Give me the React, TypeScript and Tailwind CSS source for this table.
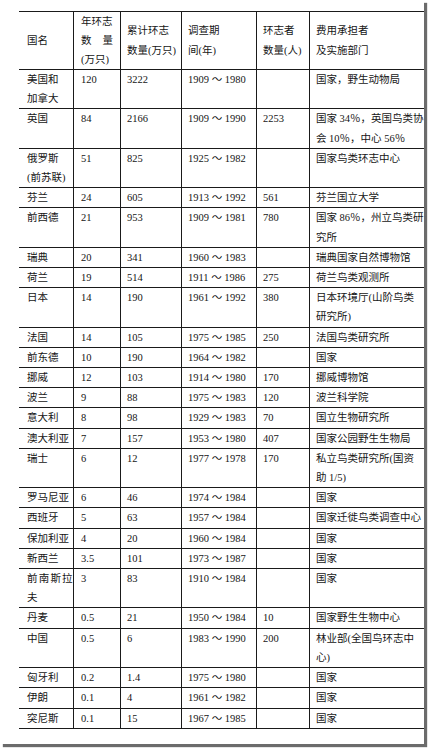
import React from 'react';

type Row = {
  name: string[];
  perYear: string;
  total: string;
  period: string;
  ringers: string;
  dept: string[];
};

const rows: Row[] = [
  { name: ['美国和', '加拿大'], perYear: '120', total: '3222', period: '1909 ～ 1980', ringers: '', dept: ['国家，野生动物局'] },
  { name: ['英国'], perYear: '84', total: '2166', period: '1909 ～ 1990', ringers: '2253', dept: ['国家 34％，英国鸟类协', '会 10％，中心 56％'] },
  { name: ['俄罗斯', '(前苏联)'], perYear: '51', total: '825', period: '1925 ～ 1982', ringers: '', dept: ['国家鸟类环志中心'] },
  { name: ['芬兰'], perYear: '24', total: '605', period: '1913 ～ 1992', ringers: '561', dept: ['芬兰国立大学'] },
  { name: ['前西德'], perYear: '21', total: '953', period: '1909 ～ 1981', ringers: '780', dept: ['国家 86％，州立鸟类研', '究所'] },
  { name: ['瑞典'], perYear: '20', total: '341', period: '1960 ～ 1983', ringers: '', dept: ['瑞典国家自然博物馆'] },
  { name: ['荷兰'], perYear: '19', total: '514', period: '1911 ～ 1986', ringers: '275', dept: ['荷兰鸟类观测所'] },
  { name: ['日本'], perYear: '14', total: '190', period: '1961 ～ 1992', ringers: '380', dept: ['日本环境厅(山阶鸟类', '研究所)'] },
  { name: ['法国'], perYear: '14', total: '105', period: '1975 ～ 1985', ringers: '250', dept: ['法国鸟类研究所'] },
  { name: ['前东德'], perYear: '10', total: '190', period: '1964 ～ 1982', ringers: '', dept: ['国家'] },
  { name: ['挪威'], perYear: '12', total: '103', period: '1914 ～ 1980', ringers: '170', dept: ['挪威博物馆'] },
  { name: ['波兰'], perYear: '9', total: '88', period: '1975 ～ 1983', ringers: '120', dept: ['波兰科学院'] },
  { name: ['意大利'], perYear: '8', total: '98', period: '1929 ～ 1983', ringers: '70', dept: ['国立生物研究所'] },
  { name: ['澳大利亚'], perYear: '7', total: '157', period: '1953 ～ 1980', ringers: '407', dept: ['国家公园野生生物局'] },
  { name: ['瑞士'], perYear: '6', total: '12', period: '1977 ～ 1978', ringers: '170', dept: ['私立鸟类研究所(国资', '助 1/5)'] },
  { name: ['罗马尼亚'], perYear: '6', total: '46', period: '1974 ～ 1984', ringers: '', dept: ['国家'] },
  { name: ['西班牙'], perYear: '5', total: '63', period: '1957 ～ 1984', ringers: '', dept: ['国家迁徙鸟类调查中心'] },
  { name: ['保加利亚'], perYear: '4', total: '20', period: '1960 ～ 1984', ringers: '', dept: ['国家'] },
  { name: ['新西兰'], perYear: '3.5', total: '101', period: '1973 ～ 1987', ringers: '', dept: ['国家'] },
  { name: ['前南斯拉', '夫'], perYear: '3', total: '83', period: '1910 ～ 1984', ringers: '', dept: ['国家'] },
  { name: ['丹麦'], perYear: '0.5', total: '21', period: '1950 ～ 1984', ringers: '10', dept: ['国家野生生物中心'] },
  { name: ['中国'], perYear: '0.5', total: '6', period: '1983 ～ 1990', ringers: '200', dept: ['林业部(全国鸟环志中', '心)'] },
  { name: ['匈牙利'], perYear: '0.2', total: '1.4', period: '1975 ～ 1980', ringers: '', dept: ['国家'] },
  { name: ['伊朗'], perYear: '0.1', total: '4', period: '1961 ～ 1982', ringers: '', dept: ['国家'] },
  { name: ['突尼斯'], perYear: '0.1', total: '15', period: '1967 ～ 1985', ringers: '', dept: ['国家'] },
];

const Lines = ({ lines }: { lines: string[] }) => (
  <>
    {lines.map((l, i) => (
      <div key={i} className={l === '前南斯拉' ? 'tracking-[1.2px]' : ''}>
        {l}
      </div>
    ))}
  </>
);

const App = () => {
  return (
    <div className="w-[429px] h-[750px] bg-white">
      <div
        className="w-[424px] h-[744px] bg-white overflow-hidden shadow-[3px_3px_1px_#6b6b6b] pl-[19px] pt-[11px] text-[10.5px] leading-[19.2px] text-[#151515] whitespace-nowrap"
        style={{ fontFamily: '"Liberation Serif", "Noto Sans CJK SC", serif' }}
      >
        <div className="w-[405px] border-t border-[#1a1a1a]">
          {/* header */}
          <div className="flex h-[58px] border-b border-[#1a1a1a]">
            <div className="w-[55px] shrink-0 border-r border-[#1a1a1a] pl-[8px] flex flex-col justify-center">
              国名
            </div>
            <div className="w-[47px] shrink-0 border-r border-[#1a1a1a] pl-[7px] flex flex-col justify-center">
              <div>年环志</div>
              <div className="flex justify-between w-[32px]">
                <span>数</span>
                <span>量</span>
              </div>
              <div>(万只)</div>
            </div>
            <div className="w-[61px] shrink-0 border-r border-[#1a1a1a] pl-[6px] flex flex-col justify-center">
              <div>累计环志</div>
              <div>数量(万只)</div>
            </div>
            <div className="w-[75px] shrink-0 border-r border-[#1a1a1a] pl-[6px] flex flex-col justify-center">
              <div>调查期</div>
              <div>间(年)</div>
            </div>
            <div className="w-[53px] shrink-0 border-r border-[#1a1a1a] pl-[6px] flex flex-col justify-center">
              <div>环志者</div>
              <div>数量(人)</div>
            </div>
            <div className="flex-1 min-w-0 overflow-hidden pl-[6px] flex flex-col justify-center">
              <div>费用承担者</div>
              <div>及实施部门</div>
            </div>
          </div>

          {rows.map((r, i) => (
            <div key={i} className="flex border-b border-[#1a1a1a]">
              <div className="w-[55px] shrink-0 border-r border-[#1a1a1a] pl-[8px]">
                <Lines lines={r.name} />
              </div>
              <div className="w-[47px] shrink-0 border-r border-[#1a1a1a] pl-[7px]">{r.perYear}</div>
              <div className="w-[61px] shrink-0 border-r border-[#1a1a1a] pl-[6px]">{r.total}</div>
              <div className="w-[75px] shrink-0 border-r border-[#1a1a1a] pl-[6px]">{r.period}</div>
              <div className="w-[53px] shrink-0 border-r border-[#1a1a1a] pl-[6px]">{r.ringers}</div>
              <div className="flex-1 min-w-0 overflow-hidden pl-[6px]">
                <Lines lines={r.dept} />
              </div>
            </div>
          ))}
        </div>
      </div>
    </div>
  );
};

export default App;
